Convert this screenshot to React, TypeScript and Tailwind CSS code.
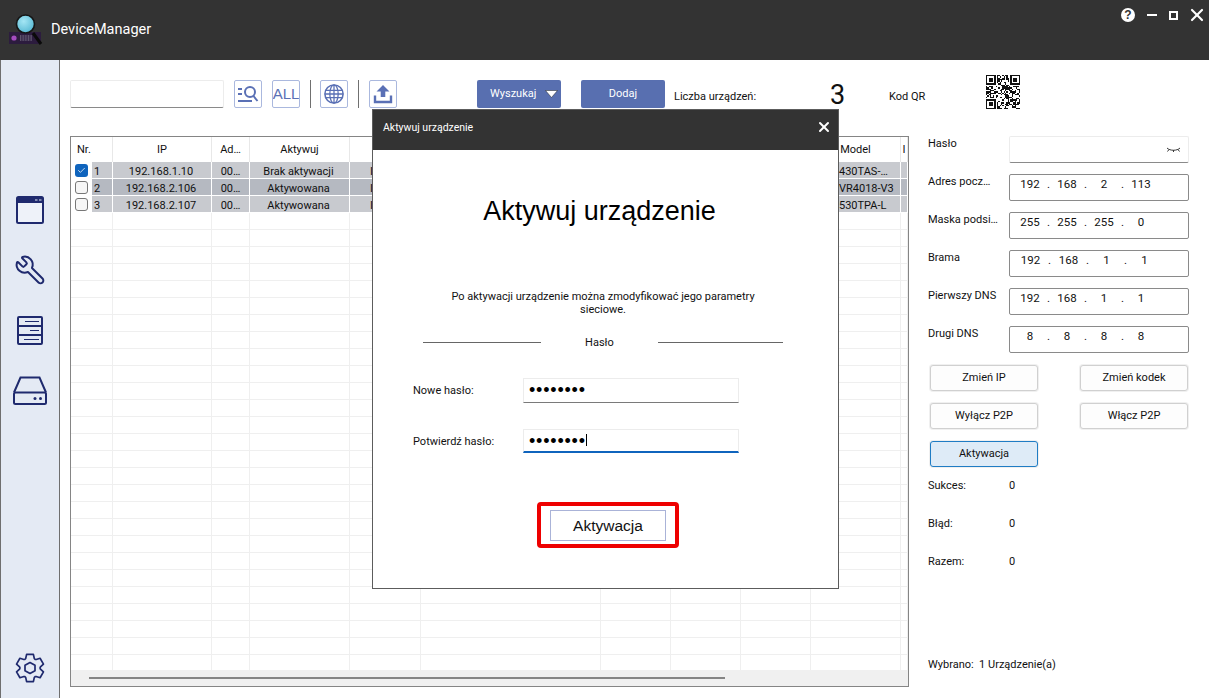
import React from "react";
import { Wrench, X, Check } from "lucide-react";

const NAVY = "#1f2a6e";
const BLUE = "#5a70b5";
const COLS = [42, 99, 38, 100, 71, 180, 70, 70, 70, 90, 7];

function gearPath(cx: number, cy: number) {
  const pts: string[] = [];
  const pt = (deg: number, r: number) => {
    const a = (deg * Math.PI) / 180;
    return `${(cx + r * Math.cos(a)).toFixed(2)} ${(cy + r * Math.sin(a)).toFixed(2)}`;
  };
  for (let i = 0; i < 6; i++) {
    const a = -90 + i * 60;
    pts.push(pt(a - 24, 10.5), pt(a - 14, 14), pt(a + 14, 14), pt(a + 24, 10.5), pt(a + 30, 10));
  }
  return "M" + pts.join("L") + "Z";
}

function qrPath() {
  const n = 25;
  let seed = 17;
  const rnd = () => {
    seed = (seed * 1103515245 + 12345) & 0x7fffffff;
    return seed / 0x7fffffff;
  };
  let d = "";
  const inFinder = (x: number, y: number) =>
    (x < 8 && y < 8) || (x > 16 && y < 8) || (x < 8 && y > 16);
  for (let y = 0; y < n; y++) {
    for (let x = 0; x < n; x++) {
      if (!inFinder(x, y) && rnd() > 0.5) d += `M${x} ${y}h1v1h-1z`;
    }
  }
  for (const [ox, oy] of [[0, 0], [18, 0], [0, 18]]) {
    d += `M${ox} ${oy}h7v7h-7zM${ox + 1} ${oy + 1}v5h5v-5zM${ox + 2} ${oy + 2}h3v3h-3z`;
  }
  return d;
}

function Logo() {
  return (
    <svg width="36" height="36" viewBox="0 0 36 36" className="ml-[8px] mt-[11px]">
      <defs>
        <radialGradient id="lens" cx="0.4" cy="0.35" r="0.75">
          <stop offset="0" stopColor="#a4e6f4" />
          <stop offset="1" stopColor="#4fb4d0" />
        </radialGradient>
      </defs>
      <rect x="1" y="21" width="32" height="12" fill="#2c1c3e" />
      <circle cx="6" cy="27" r="2.6" fill="#a54cc0" />
      <path d="M12 25h12M12 27h12M12 29h12" stroke="#8d8a9a" strokeWidth="1" strokeDasharray="1 0.6" />
      <path d="M25 22l8 11" stroke="#0a0a0a" strokeWidth="3" />
      <circle cx="17.5" cy="13" r="9" fill="url(#lens)" stroke="#161616" strokeWidth="1.6" />
    </svg>
  );
}

function WindowIcon() {
  return (
    <svg width="28" height="28" viewBox="0 0 28 28">
      <rect x="1" y="1" width="26" height="26" rx="1.5" fill="#eef2f9" stroke={NAVY} strokeWidth="2" />
      <rect x="1" y="1" width="26" height="6" fill={NAVY} />
      <path d="M19 4h2.5M23 4h2.5" stroke="#e4eaf4" strokeWidth="1" />
    </svg>
  );
}

function ServerIcon() {
  return (
    <svg width="26" height="29" viewBox="0 0 26 29" fill="none" stroke={NAVY} strokeWidth="1.6">
      <rect x="1" y="1" width="24" height="27" rx="1" strokeWidth="2" />
      <path d="M1 10h24M1 19h24" strokeWidth="2" />
      <path d="M8 5.5h14M13 14.5h9M7 23.5h15" strokeWidth="1.2" />
    </svg>
  );
}

function DriveIcon() {
  return (
    <svg width="34" height="29" viewBox="0 0 34 29" fill="none" stroke={NAVY} strokeWidth="2">
      <path d="M1 16.5L7.5 1.5h19L33 16.5" />
      <rect x="1" y="16.5" width="32" height="11.5" rx="1.5" />
      <circle cx="22" cy="22.5" r="1.5" fill={NAVY} stroke="none" />
      <circle cx="27.5" cy="22.5" r="1.5" fill={NAVY} stroke="none" />
    </svg>
  );
}

function GearIcon() {
  return (
    <svg width="30" height="32" viewBox="0 0 30 32" fill="none" stroke={NAVY} strokeWidth="1.7" strokeLinejoin="round">
      <path d={gearPath(15, 16)} />
      <path d="M15 10.5l5 2.8v5.4l-5 2.8-5-2.8v-5.4z" />
    </svg>
  );
}

function ToolBtn({ children }: { children: React.ReactNode }) {
  return (
    <div className="flex h-[28px] w-[28px] shrink-0 items-center justify-center overflow-hidden rounded-[2px] border border-[#aab8de] bg-white">
      {children}
    </div>
  );
}

function Field({ label, values, wide }: { label: string; values: string[]; wide?: boolean }) {
  return (
    <div className="flex h-[38px]">
      <div className="w-[81px] truncate pt-[1px] leading-[14px] text-[#111]">{label}</div>
      <div className="flex h-[27px] w-[180px] rounded-[2px] border border-[#8a8a8a] pl-[5px] pt-[1px] text-[11.5px] leading-[16px] text-[#111]">
        {values.map((v, i) => (
          <React.Fragment key={i}>
            <span className={wide ? "w-[31px] text-center" : "w-[30px] text-center"}>{v}</span>
            {i < 3 && <span className="w-[7px] text-center">.</span>}
          </React.Fragment>
        ))}
      </div>
    </div>
  );
}

function Btn({ children, active }: { children: React.ReactNode; active?: boolean }) {
  return (
    <button
      className={
        active
          ? "h-[26px] w-[108px] rounded-[3px] border border-[#1f7cc4] bg-[#deebf7] text-[11px] text-[#111] ring-1 ring-[#f0f0f0]"
          : "h-[26px] w-[108px] rounded-[3px] border border-[#d0d0d0] bg-[#fdfdfd] text-[11px] text-[#111] ring-1 ring-[#f0f0f0]"
      }
    >
      {children}
    </button>
  );
}

function Stat({ label, value }: { label: string; value: string }) {
  return (
    <div className="flex h-[38px] items-center">
      <span className="w-[81px] text-[#111]">{label}</span>
      <span className="text-[#111]">{value}</span>
    </div>
  );
}

const ROWS = [
  { n: "1", ip: "192.168.1.10", act: "Brak aktywacji", model: "430TAS-…", checked: true, bg: "bg-[#c8cacf]" },
  { n: "2", ip: "192.168.2.106", act: "Aktywowana", model: "VR4018-V3", checked: false, bg: "bg-[#b5b9c1]" },
  { n: "3", ip: "192.168.2.107", act: "Aktywowana", model: "530TPA-L", checked: false, bg: "bg-[#c8cacf]" },
];

function DataRow({ r }: { r: (typeof ROWS)[number] }) {
  return (
    <div className="flex h-[17px] border-b border-white text-[11px] leading-[19px] text-[#111]">
      <div className="flex w-[42px] shrink-0 border-r border-white">
        <div className="flex w-[21px] shrink-0 items-center justify-center bg-white">
          {r.checked ? (
            <span className="flex h-[13px] w-[13px] items-center justify-center rounded-[3px] bg-[#0f64bd]">
              <Check size={9} color="#ffffff" strokeWidth={2} />
            </span>
          ) : (
            <span className="h-[13px] w-[13px] rounded-[3px] border border-[#777] bg-[#f6f6f6]" />
          )}
        </div>
        <div className={`flex-1 pl-[2px] ${r.bg}`}>{r.n}</div>
      </div>
      {COLS.slice(1).map((w, i) => {
        let content: React.ReactNode = null;
        let cls = "text-center";
        if (i === 0) {
          content = r.ip;
          cls = "pr-[2px] text-center";
        }
        if (i === 1) content = "00…";
        if (i === 2) {
          content = r.act;
          cls = "pr-[2px] text-center";
        }
        if (i === 3) {
          content = "I";
          cls = "pl-[20px]";
        }
        if (i === 8) {
          content = r.model;
          cls = "pl-[28px]";
        }
        return (
          <div key={i} style={{ width: w }} className={`shrink-0 overflow-hidden whitespace-nowrap border-r border-white ${r.bg} ${cls}`}>
            {content}
          </div>
        );
      })}
    </div>
  );
}

function EmptyRow() {
  return (
    <div className="flex h-[17px] border-b border-[#efefef]">
      {COLS.map((w, i) => (
        <div key={i} style={{ width: w }} className="shrink-0 border-r border-[#efefef]" />
      ))}
    </div>
  );
}

export default function App() {
  const headers = ["Nr.", "IP", "Ad…", "Aktywuj", "", "", "", "", "", "Model", "I"];
  return (
    <div className="relative flex h-[698px] w-full flex-col overflow-hidden bg-white font-['Roboto','Noto_Sans',sans-serif] text-[11px]">
      {/* Title bar */}
      <header className="flex h-[60px] shrink-0 bg-[#333333]">
        <Logo />
        <span className="ml-[7px] mt-[19px] text-[14.5px] leading-[22px] text-white">DeviceManager</span>
        <div className="ml-auto mr-[2px] mt-[5px] flex h-[20px] items-center">
          <span className="flex h-[14px] w-[14px] items-center justify-center rounded-full bg-white font-['Liberation_Sans',sans-serif] text-[12px] font-bold leading-[14px] text-[#333]">?</span>
          <span className="ml-[12px] h-[2px] w-[10px] bg-white" />
          <span className="ml-[12px] h-[9px] w-[9px] border-2 border-white" />
          <X size={20} color="#ffffff" strokeWidth={2.6} className="ml-[9px]" />
        </div>
      </header>

      <div className="flex min-h-0 flex-1">
        {/* Sidebar */}
        <aside className="flex w-[60px] shrink-0 flex-col border-x border-[#6f6f6f] bg-[#e4eaf4] pt-[120px]">
          <div className="flex h-[60px] items-center justify-center"><WindowIcon /></div>
          <div className="flex h-[60px] items-center justify-center">
            <Wrench size={32} color={NAVY} strokeWidth={1.5} className="-scale-x-100" />
          </div>
          <div className="flex h-[60px] items-center justify-center"><ServerIcon /></div>
          <div className="flex h-[60px] items-center justify-center"><DriveIcon /></div>
          <div className="mt-auto flex h-[60px] items-center justify-center"><GearIcon /></div>
        </aside>

        <main className="flex min-w-0 flex-1 flex-col pl-[10px]">
          {/* Toolbar */}
          <div className="flex h-[76px] shrink-0 items-start pt-[20px]">
            <div className="h-[28px] w-[154px] rounded-[2px] border border-[#ececec] border-b-[#8a8a8a] bg-white" />
            <div className="ml-[10px]">
              <ToolBtn>
                <svg width="22" height="20" viewBox="0 0 22 20" fill="none" stroke={BLUE} strokeWidth="2">
                  <path d="M1 5h4M1 10h4M1 17h14" />
                  <circle cx="13" cy="8" r="5" />
                  <path d="M16.5 12l4 5" />
                </svg>
              </ToolBtn>
            </div>
            <div className="ml-[10px]">
              <ToolBtn>
                <span className="whitespace-nowrap font-['Liberation_Sans',sans-serif] text-[15px] leading-[28px] text-[#5a70b5]">ALL</span>
              </ToolBtn>
            </div>
            <div className="ml-[10px] h-[28px] w-[1px] bg-[#707070]" />
            <div className="ml-[9px]">
              <ToolBtn>
                <svg width="20" height="20" viewBox="0 0 22 22" fill="none" stroke={BLUE} strokeWidth="1.4">
                  <circle cx="11" cy="11" r="10" strokeWidth="1.7" />
                  <ellipse cx="11" cy="11" rx="4.6" ry="10" />
                  <path d="M11 1v20M2 7h18M1 11h20M2 15h18" />
                </svg>
              </ToolBtn>
            </div>
            <div className="ml-[10px] h-[28px] w-[1px] bg-[#707070]" />
            <div className="ml-[10px]">
              <ToolBtn>
                <svg width="20" height="20" viewBox="0 0 20 20" fill={BLUE}>
                  <path d="M10 1l6.5 6.5h-4.2V13H7.7V7.5H3.5z" />
                  <path d="M2 11.5v6.5h16v-6.5" fill="none" stroke={BLUE} strokeWidth="2.4" />
                </svg>
              </ToolBtn>
            </div>
            <button className="ml-[80px] flex h-[28px] w-[84px] items-center rounded-[2px] bg-[#586fb0] pl-[13px] text-[11px] text-white">
              Wyszukaj
              <svg width="13" height="8" viewBox="0 0 13 8" className="ml-[9px]">
                <path d="M0.5 0.5h12L6.5 7.5z" fill="#ffffff" stroke="#222" strokeWidth="0.5" />
              </svg>
            </button>
            <button className="ml-[20px] h-[28px] w-[84px] rounded-[2px] bg-[#586fb0] text-[11px] text-white">Dodaj</button>
            <span className="ml-[9px] mt-[9px] w-[156px] leading-[16px] text-[#111]">Liczba urządzeń:</span>
            <span className="-mt-[4px] w-[59px] text-[27px] leading-[38px] text-[#111]">3</span>
            <span className="mt-[9px] w-[97px] leading-[16px] text-[#111]">Kod QR</span>
            <svg width="34" height="34" viewBox="0 0 25 25" shapeRendering="crispEdges" className="-mt-[5px]" fillRule="evenodd">
              <path d={qrPath()} fill="#111" />
            </svg>
          </div>

          <div className="flex min-h-0 flex-1">
            {/* Table */}
            <section className="flex h-[551px] w-[839px] shrink-0 flex-col border border-[#858585] bg-white">
              <div className="flex h-[25px] shrink-0 text-[#111]">
                {headers.map((h, i) => (
                  <div
                    key={i}
                    style={{ width: COLS[i] }}
                    className={
                      i === 0
                        ? "shrink-0 overflow-hidden border-r border-[#e8e8e8] pl-[6px] leading-[26px]"
                        : "shrink-0 overflow-hidden whitespace-nowrap border-r border-[#e8e8e8] text-center leading-[26px]"
                    }
                  >
                    {h}
                  </div>
                ))}
              </div>
              <div className="min-h-0 flex-1 overflow-hidden">
                {ROWS.map((r) => (
                  <DataRow key={r.n} r={r} />
                ))}
                {Array.from({ length: 28 }).map((_, i) => (
                  <EmptyRow key={i} />
                ))}
              </div>
              <div className="flex h-[16px] shrink-0 items-center bg-[#f0f0f0] pl-[18px]">
                <div className="h-[2px] w-[636px] bg-[#858585]" />
              </div>
            </section>

            {/* Right panel */}
            <section className="flex h-[551px] flex-1 flex-col pl-[19px]">
              <div className="flex h-[38px]">
                <div className="w-[81px] pt-[1px] leading-[14px] text-[#111]">Hasło</div>
                <div className="flex h-[27px] w-[180px] items-center justify-end rounded-[2px] border border-[#ececec] border-b-[#8a8a8a] pr-[7px]">
                  <svg width="15" height="6" viewBox="0 0 15 6" fill="none" stroke="#222" strokeWidth="0.9">
                    <path d="M1 1c3 3 10 3 13 0M3 2.5L1.5 4.5M7.5 3.2V5M12 2.5l1.5 2" />
                  </svg>
                </div>
              </div>
              <Field label="Adres pocz…" values={["192", "168", "2", "113"]} />
              <Field label="Maska podsi…" values={["255", "255", "255", "0"]} />
              <Field label="Brama" values={["192", "168", "1", "1"]} wide />
              <Field label="Pierwszy DNS" values={["192", "168", "1", "1"]} />
              <Field label="Drugi DNS" values={["8", "8", "8", "8"]} />
              <div className="mt-[1px] flex flex-col gap-[12px] pl-[2px]">
                <div className="flex gap-[42px]">
                  <Btn>Zmień IP</Btn>
                  <Btn>Zmień kodek</Btn>
                </div>
                <div className="flex gap-[42px]">
                  <Btn>Wyłącz P2P</Btn>
                  <Btn>Włącz P2P</Btn>
                </div>
                <div className="flex">
                  <Btn active>Aktywacja</Btn>
                </div>
              </div>
              <div>
                <Stat label="Sukces:" value="0" />
                <Stat label="Błąd:" value="0" />
                <Stat label="Razem:" value="0" />
              </div>
              <div className="mt-auto pb-[14px] leading-[16px] text-[#111]">Wybrano:&nbsp; 1 Urządzenie(a)</div>
            </section>
          </div>
        </main>
      </div>

      {/* Modal */}
      <div className="absolute left-[372px] top-[109px] flex h-[480px] w-[467px] flex-col border border-[#5c5c5c] bg-white">
        <div className="flex h-[40px] shrink-0 items-center justify-between bg-[#333333] pb-[5px] pl-[10px] pr-[6px] text-[10.5px] text-white">
          <span>Aktywuj urządzenie</span>
          <X size={16} color="#ffffff" strokeWidth={3} className="-mt-[1px]" />
        </div>
        <h1 className="mt-[44px] pr-[12px] text-center font-['Liberation_Sans',sans-serif] text-[27px] leading-[34px] text-black">Aktywuj urządzenie</h1>
        <p className="ml-[65px] mt-[62px] w-[330px] text-center leading-[13px] text-[#111]">
          Po aktywacji urządzenie można zmodyfikować jego parametry sieciowe.
        </p>
        <div className="mt-[19px] flex h-[14px] items-center pl-[50px] text-[#111]">
          <div className="h-[1px] w-[118px] bg-[#666]" />
          <span className="w-[117px] pt-[2px] text-center">Hasło</span>
          <div className="h-[1px] w-[125px] bg-[#666]" />
        </div>
        <div className="mt-[29px] flex h-[25px] items-center pl-[40px] text-[#111]">
          <span className="w-[110px] pt-[2px]">Nowe hasło:</span>
          <div className="h-[25px] w-[216px] border border-[#ececec] border-b-[#7a7a7a] pl-[5px] pt-[1px] font-['Liberation_Sans',sans-serif] text-[18px] leading-[20px] tracking-[0.8px] text-black">••••••••</div>
        </div>
        <div className="mt-[26px] flex h-[24px] items-center pl-[40px] text-[#111]">
          <span className="w-[110px] pt-[2px]">Potwierdź hasło:</span>
          <div className="flex h-[24px] w-[216px] items-start border border-[#ececec] border-b-2 border-b-[#0f64bd] pl-[5px] pt-[1px] font-['Liberation_Sans',sans-serif] text-[18px] leading-[20px] tracking-[0.8px] text-black">
            ••••••••
            <span className="mt-[3px] h-[12px] w-[1px] bg-black" />
          </div>
        </div>
        <div className="ml-[164px] mt-[49px] flex h-[46px] w-[142px] items-center justify-center rounded-[4px] border-[4px] border-[#ee0000]">
          <button className="h-[31px] w-[116px] border border-[#aab3d8] bg-white pt-[1px] font-['Liberation_Sans',sans-serif] text-[15.5px] text-[#111]">Aktywacja</button>
        </div>
      </div>
    </div>
  );
}
